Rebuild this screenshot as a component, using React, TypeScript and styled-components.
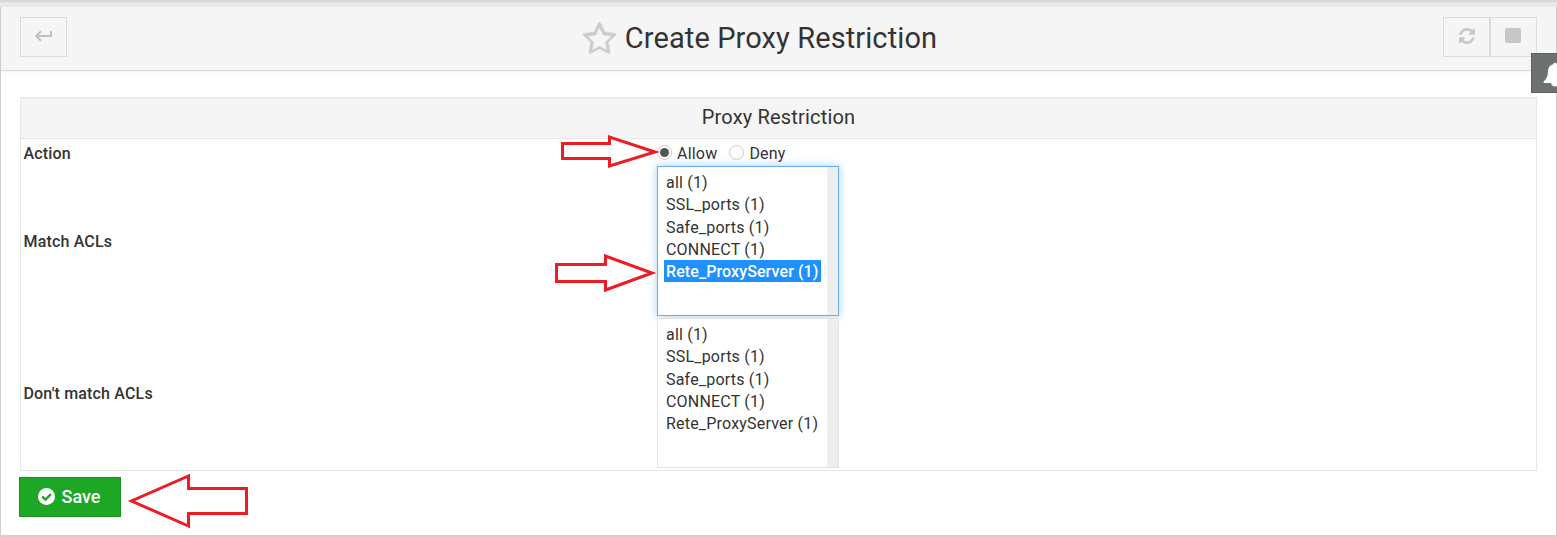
import React from "react";
import styled, { createGlobalStyle } from "styled-components";

const GlobalStyle = createGlobalStyle`
  *, *::before, *::after { box-sizing: border-box; }
  html, body { margin: 0; overflow: hidden; }
  body { background: #fff; color: #333; font-family: Roboto, "Liberation Sans", sans-serif; font-size: 16px; }
`;

const Page = styled.div`
  position: relative;
  width: 1557px;
  height: 537px;
  overflow: hidden;
  display: flex;
  flex-direction: column;
  border-top: 2px solid #d6d6d6;
  border-bottom: 2px solid #d0d0d0;
`;

const Frame = styled.div`
  flex: 1;
  border: solid #cfcfcf;
  border-width: 0 1px;
`;

const TopStrip = styled.div`
  height: 5px;
  background: #e8e8e8;
`;

const Header = styled.header`
  height: 64px;
  display: grid;
  grid-template-columns: 1fr auto 1fr;
  align-items: start;
  padding: 10px 19px 0;
  background: #f5f5f5;
  border-bottom: 1px solid #ddd;
  box-shadow: 0 1px 2px rgba(0, 0, 0, 0.06);
`;

const Tools = styled.div<{ $end?: boolean }>`
  display: flex;
  justify-content: ${(p) => (p.$end ? "flex-end" : "flex-start")};
`;

const ToolButton = styled.button`
  width: 47px;
  height: 40px;
  padding: 0;
  display: flex;
  align-items: center;
  justify-content: center;
  background: #f5f5f5;
  border: 1px solid #dcdcdc;
  color: #c8c8c8;
  svg { display: block; margin-top: -3px; }
`;

const Title = styled.h1`
  display: flex;
  align-items: center;
  gap: 9px;
  height: 42px;
  margin: 0;
  padding-right: 37px;
  font-size: 29px;
  font-weight: 400;
  line-height: 42px;
  letter-spacing: 0.1px;
  white-space: nowrap;
  svg { margin-top: -1px; }
`;

const Panel = styled.section`
  margin: 26px 19px 0;
  height: 374px;
  border: 1px solid #e7e7e7;
`;

const PanelTitle = styled.h2`
  margin: 0;
  height: 41px;
  background: #f5f5f5;
  border-top: 1px solid #efefef;
  border-bottom: 1px solid #e7e7e7;
  font-size: 20px;
  font-weight: 400;
  line-height: 37px;
  letter-spacing: 0.18px;
  text-align: center;
`;

const Row = styled.div<{ $height: number }>`
  height: ${(p) => p.$height}px;
  display: grid;
  grid-template-columns: 636px 1fr;
  align-items: center;
`;

const ActionRow = styled(Row)`
  padding-top: 2px;
`;

const Label = styled.div`
  padding-left: 2.5px;
  font-weight: 500;
  line-height: 22px;
  letter-spacing: 0.17px;
`;

const Choices = styled.div`
  display: flex;
  align-items: center;
  gap: 12px;
  line-height: 22px;
  letter-spacing: 0.2px;
`;

const Choice = styled.label`
  display: flex;
  align-items: center;
  gap: 5px;
`;

const Radio = styled.span<{ $on?: boolean }>`
  width: 15px;
  height: 15px;
  margin-top: -2px;
  display: flex;
  align-items: center;
  justify-content: center;
  border: 1px solid #ccc;
  border-radius: 50%;
  background: #fff;
  &::after {
    content: "";
    width: 9px;
    height: 9px;
    border-radius: 50%;
    background: ${(p) => (p.$on ? "#555" : "transparent")};
  }
`;

const List = styled.div<{ $focus?: boolean }>`
  width: 182px;
  height: 150px;
  display: flex;
  margin-bottom: 2px;
  border: 1px solid ${(p) => (p.$focus ? "#66afe9" : "#e4e4e4")};
  background: #fff;
  box-shadow: ${(p) => (p.$focus ? "0 0 8px rgba(102, 175, 233, 0.6)" : "none")};
`;

const Options = styled.div`
  flex: 1;
  padding: 4px 6px;
`;

const Gutter = styled.div`
  width: 11px;
  background: #eee;
`;

const Option = styled.div<{ $on?: boolean }>`
  width: 157px;
  height: 22.3px;
  padding-left: 2px;
  line-height: 24px;
  font-weight: ${(p) => (p.$on ? 500 : 400)};
  letter-spacing: ${(p) => (p.$on ? 0.1 : 0.2)}px;
  white-space: nowrap;
  color: ${(p) => (p.$on ? "#fff" : "#333")};
  background: ${(p) => (p.$on ? "#1e90ff" : "transparent")};
`;

const SaveButton = styled.button`
  width: 102px;
  height: 40px;
  margin: 6px 0 0 18px;
  padding: 0 2px 2px 0;
  display: flex;
  align-items: center;
  justify-content: center;
  gap: 7px;
  background: #1ea724;
  border: 1px solid #1b931f;
  color: #fff;
  font: 500 18px Roboto, sans-serif;
`;

const Notice = styled.div`
  position: absolute;
  top: 51px;
  right: 0;
  width: 26px;
  height: 40px;
  overflow: hidden;
  padding: 8px 0 0 11px;
  background: #6d7270;
  border: 1px solid #5b5f5d;
  border-right: 0;
  svg { display: block; }
`;

const Pointers = styled.svg`
  position: absolute;
  top: -2px;
  left: 0;
  pointer-events: none;
`;

const acls = ["all (1)", "SSL_ports (1)", "Safe_ports (1)", "CONNECT (1)", "Rete_ProxyServer (1)"];

function AclList({ selected, focus }: { selected?: string; focus?: boolean }) {
  return (
    <List $focus={focus}>
      <Options>
        {acls.map((a) => (
          <Option key={a} $on={a === selected}>{a}</Option>
        ))}
      </Options>
      <Gutter />
    </List>
  );
}

export default function App() {
  return (
    <>
      <GlobalStyle />
      <Page>
        <TopStrip />
        <Frame>
          <Header>
            <Tools>
              <ToolButton aria-label="Back">
                <svg width="18" height="12" viewBox="0 0 18 12" fill="none" stroke="#c0c0c0" strokeWidth="2">
                  <path d="M16 1v5H1.500M6 1.200 1.200 6 6 10.800" />
                </svg>
              </ToolButton>
            </Tools>
            <Title>
              <svg width="33" height="32" viewBox="0 0 1664 1600" fill="#ccc" stroke="#ccc" strokeWidth="30">
                <path d="M1137 1004l306-297-422-62-189-382-189 382-422 62 306 297-73 421 378-199 377 199zM1664 615q0 22-26 48l-363 354 86 500q1 7 1 20 0 50-41 50-19 0-40-12l-449-236-449 236q-22 12-40 12-21 0-31.500-14.500t-10.500-35.500q0-6 2-20l86-500-364-354q-25-27-25-48 0-37 56-46l502-73 225-455q19-41 49-41t49 41l225 455 502 73q56 9 56 46z" />
              </svg>
              Create Proxy Restriction
            </Title>
            <Tools $end>
              <ToolButton aria-label="Refresh">
                <svg width="18" height="16" viewBox="-48 0 1632 1536" fill="currentColor">
                  <path d="M1511 928q0 5-1 7-64 268-268 434.500T764 1536q-146 0-282.500-55T238 1324l-129 129q-19 19-45 19t-45-19-19-45V960q0-26 19-45t45-19h448q26 0 45 19t19 45-19 45l-137 137q71 66 161 102t187 36q134 0 250-65t186-179q11-17 53-117 8-23 30-23h192q13 0 22.500 9.500t9.500 22.500zm25-800v448q0 26-19 45t-45 19h-448q-26 0-45-19t-19-45 19-45l138-138Q969 256 768 256q-134 0-250 65T332 500q-11 17-53 117-8 23-30 23H50q-13 0-22.500-9.500T18 608v-7q65-268 270-434.500T768 0q146 0 284 55.500T1297 212l130-129q19-19 45-19t45 19 19 45z" />
                </svg>
              </ToolButton>
              <ToolButton aria-label="Stop">
                <svg width="17" height="15" viewBox="0 0 17 15"><rect width="16" height="15" rx="2" fill="currentColor" /></svg>
              </ToolButton>
            </Tools>
          </Header>
          <Panel>
            <PanelTitle>Proxy Restriction</PanelTitle>
            <ActionRow $height={27}>
              <Label>Action</Label>
              <Choices>
                <Choice><Radio $on />Allow</Choice>
                <Choice><Radio />Deny</Choice>
              </Choices>
            </ActionRow>
            <Row $height={152}>
              <Label>Match ACLs</Label>
              <AclList selected="Rete_ProxyServer (1)" focus />
            </Row>
            <Row $height={152}>
              <Label>Don't match ACLs</Label>
              <AclList />
            </Row>
          </Panel>
          <SaveButton>
            <svg width="17" height="17" viewBox="0 0 16 16">
              <circle cx="8" cy="8" r="8" fill="#fff" />
              <path d="M3.900 7.900 7 11l5.200-5.200" fill="none" stroke="#1ea724" strokeWidth="2.200" />
            </svg>
            Save
          </SaveButton>
        </Frame>
        <Notice>
          <svg width="24" height="25" viewBox="0 0 24 25" fill="#fff">
            <path d="M12 .8c-1 0-1.600.6-1.600 1.500C7 3 5 5.500 5 9c0 5-1.500 8-4.300 10.500V21H8c.3 2 2 3.500 4 3.500s3.700-1.500 4-3.500h7.300v-1.500C20.500 17 19 14 19 9c0-3.500-2-6-5.400-6.700 0-.9-.6-1.500-1.600-1.500z" />
          </svg>
        </Notice>
        <Pointers width="1557" height="537" fill="none" stroke="#ed1c24" strokeWidth="3">
          <path d="M562.500 143.500H609.500V137L655 152 609.500 166V158.500H562.500Z" />
          <path d="M556.500 264.500H605.500V256L652 273 605.500 290V281.500H556.500Z" />
          <path d="M246.500 488.500H188.500V476L131.500 501 188.500 526V513.500H246.500Z" />
        </Pointers>
      </Page>
    </>
  );
}
